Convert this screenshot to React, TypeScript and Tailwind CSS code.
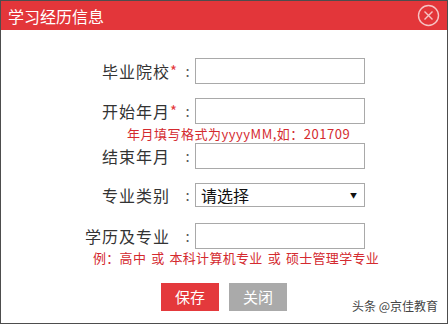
import React from "react";

const FONT = { fontFamily: '"Noto Sans CJK SC", "Noto Sans", "Liberation Sans", sans-serif' };

type Row = { label: string; required?: boolean; kind: "input" | "select"; hint?: string };

const ROWS: Row[] = [
  { label: "毕业院校", required: true, kind: "input" },
  { label: "开始年月", required: true, kind: "input", hint: "年月填写格式为yyyyMM,如：201709" },
  { label: "结束年月", kind: "input" },
  { label: "专业类别", kind: "select" },
  { label: "学历及专业", kind: "input" },
];

function CloseIcon() {
  return (
    <svg width="23" height="23" viewBox="0 0 23 23" fill="none">
      <circle cx="11.5" cy="11.5" r="10" stroke="#f6c3c4" strokeWidth="1.4" />
      <path d="M7.5 7.5 L15.5 15.5 M15.5 7.5 L7.5 15.5" stroke="#f6c3c4" strokeWidth="1.4" />
    </svg>
  );
}

function FieldRow({ row }: { row: Row }) {
  return (
    <div className="flex items-center">
      <div className="w-[169px] text-right text-[16px] tracking-[1px] text-[#333]">{row.label}</div>
      <div className="w-[10px] text-[15px] text-[#e4393c]">{row.required ? "*" : ""}</div>
      <div className="w-[15px] text-center text-[15px] text-[#555]">:</div>
      {row.kind === "input" ? (
        <div className="h-[26px] w-[170px] border border-[#a9a9a9] bg-white" />
      ) : (
        <div className="flex h-[24px] w-[170px] items-center justify-between border border-[#a9a9a9] bg-white pl-[5px] pr-[7px]">
          <span className="text-[16px] leading-none text-[#111]">请选择</span>
          <span className="text-[7px] text-[#111]">▼</span>
        </div>
      )}
    </div>
  );
}

export default function App() {
  return (
    <div className="relative flex h-[324px] w-[448px] flex-col border border-[#4d4d4d] bg-white" style={FONT}>
      <header className="flex h-[29px] items-center justify-between bg-[#e3363a] pl-[7px] pr-[7px]">
        <span className="text-[16px] text-white">学习经历信息</span>
        <CloseIcon />
      </header>

      <div className="flex flex-col pt-[28px]">
        <FieldRow row={ROWS[0]} />
        <div className="mt-[14px]">
          <FieldRow row={ROWS[1]} />
        </div>
        <div className="h-[19px] pl-[126px] text-[13px] leading-[19px] tracking-[0.5px] text-[#d42a2f]">
          {ROWS[1].hint}
        </div>
        <FieldRow row={ROWS[2]} />
        <div className="mt-[14px]">
          <FieldRow row={ROWS[3]} />
        </div>
        <div className="mt-[16px]">
          <FieldRow row={ROWS[4]} />
        </div>
        <div className="flex h-[17px] gap-[5px] pl-[92px] text-[13px] leading-[17px] tracking-[0.3px] text-[#d42a2f]">
          <span>例：高中</span>
          <span>或</span>
          <span>本科计算机专业</span>
          <span>或</span>
          <span>硕士管理学专业</span>
        </div>

        <div className="mt-[17px] flex justify-center gap-[10px]">
          <button type="button" className="h-[28px] w-[58px] bg-[#e4393c] text-[15px] text-white">
            保存
          </button>
          <button type="button" className="h-[28px] w-[58px] bg-[#aaaaaa] text-[15px] text-white">
            关闭
          </button>
        </div>
      </div>

      <span className="absolute bottom-[8px] right-[9px] text-[12px] text-[#444]">头条 @京佳教育</span>
    </div>
  );
}
